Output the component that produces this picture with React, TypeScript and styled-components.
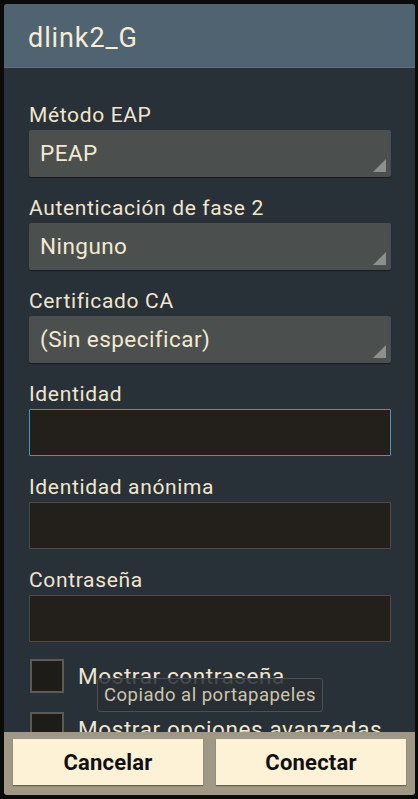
import styled, { createGlobalStyle } from 'styled-components';

const GlobalStyle = createGlobalStyle`
  html, body {
    margin: 0;
    padding: 0;
    background: #0b0b0a;
    font-family: Roboto, 'Noto Sans', sans-serif;
  }
`;

const Screen = styled.div`
  width: 418px;
  height: 799px;
  box-sizing: border-box;
  padding: 4px 3px 4px 4px;
  overflow: hidden;
`;

const Dialog = styled.div`
  position: relative;
  height: 100%;
  display: flex;
  flex-direction: column;
  border-radius: 3px;
  overflow: hidden;
  background: #283038;
`;

const TitleBar = styled.div`
  height: 64px;
  flex-shrink: 0;
  display: flex;
  align-items: center;
  padding: 4px 0 0 24px;
  box-sizing: border-box;
  background: #506370;
  border-bottom: 1px solid #5c6f7b;
  color: #f5edd6;
  font-size: 27px;
  letter-spacing: 0.9px;
`;

const Body = styled.div`
  flex: 1;
  overflow: hidden;
  padding: 15.5px 24px 0 25px;
`;

const Field = styled.div`
  margin-top: 16px;
`;

const Label = styled.div`
  height: 30px;
  line-height: 30px;
  font-size: 21px;
  letter-spacing: 0.65px;
  color: #f0e6cb;
`;

const Spinner = styled.div`
  position: relative;
  height: 47px;
  box-sizing: border-box;
  display: flex;
  align-items: center;
  padding-left: 11px;
  border-radius: 2px;
  background: #4b4f4e;
  box-shadow: 0 1px 1px rgba(0, 0, 0, 0.45);
  color: #f2e9d0;
  font-size: 22.5px;
  letter-spacing: 0.45px;

  &::after {
    content: '';
    position: absolute;
    right: 5px;
    bottom: 5px;
    width: 0;
    height: 0;
    border-left: 13px solid transparent;
    border-bottom: 13px solid #8d918e;
  }
`;

const TextInput = styled.div<{ $focused?: boolean }>`
  height: 47px;
  box-sizing: border-box;
  background: #23201b;
  border: 1px solid ${(p) => (p.$focused ? '#3e9db5' : '#4d4b44')};
  border-radius: 1px;
`;

const CheckRow = styled.div`
  display: flex;
  align-items: center;
  gap: 14px;
  height: 34px;
  margin-top: 17px;
  padding-left: 1px;
  color: #f0e6cb;
  font-size: 22.5px;
  letter-spacing: 0.6px;
  white-space: nowrap;

  & + & {
    margin-top: 19px;
  }
`;

const Box = styled.div`
  width: 34px;
  height: 34px;
  box-sizing: border-box;
  flex-shrink: 0;
  background: #1e1c19;
  border: 2px solid #5d5a52;
`;

const Toast = styled.div`
  position: absolute;
  left: 93px;
  top: 674px;
  width: 226px;
  height: 34px;
  box-sizing: border-box;
  display: flex;
  align-items: center;
  justify-content: center;
  border: 1px solid #4c5154;
  border-radius: 3px;
  background: rgba(40, 46, 52, 0.85);
  color: #cdc5ad;
  font-size: 18.5px;
  letter-spacing: 0.5px;
  white-space: nowrap;
`;

const ButtonBar = styled.div`
  height: 63px;
  flex-shrink: 0;
  box-sizing: border-box;
  display: flex;
  gap: 13px;
  padding: 7px 9px 10px 9px;
  background: #9e9885;
`;

const Button = styled.div`
  flex: 1;
  display: flex;
  align-items: center;
  justify-content: center;
  background: #fdf1d6;
  box-shadow: 0 1px 1px rgba(0, 0, 0, 0.35);
  color: #111;
  font-size: 22px;
  font-weight: 700;
  letter-spacing: 0.2px;
`;

const fields = [
  { label: 'Método EAP', value: 'PEAP' },
  { label: 'Autenticación de fase 2', value: 'Ninguno' },
  { label: 'Certificado CA', value: '(Sin especificar)' },
];

const inputs = [
  { label: 'Identidad', focused: true },
  { label: 'Identidad anónima', focused: false },
  { label: 'Contraseña', focused: false },
];

export default function App() {
  return (
    <Screen>
      <GlobalStyle />
      <Dialog>
        <TitleBar>dlink2_G</TitleBar>
        <Body>
          {fields.map((f) => (
            <Field key={f.label}>
              <Label>{f.label}</Label>
              <Spinner>{f.value}</Spinner>
            </Field>
          ))}
          {inputs.map((f) => (
            <Field key={f.label}>
              <Label>{f.label}</Label>
              <TextInput $focused={f.focused} />
            </Field>
          ))}
          <CheckRow>
            <Box />
            Mostrar contraseña
          </CheckRow>
          <CheckRow>
            <Box />
            Mostrar opciones avanzadas
          </CheckRow>
        </Body>
        <ButtonBar>
          <Button>Cancelar</Button>
          <Button>Conectar</Button>
        </ButtonBar>
        <Toast>Copiado al portapapeles</Toast>
      </Dialog>
    </Screen>
  );
}
